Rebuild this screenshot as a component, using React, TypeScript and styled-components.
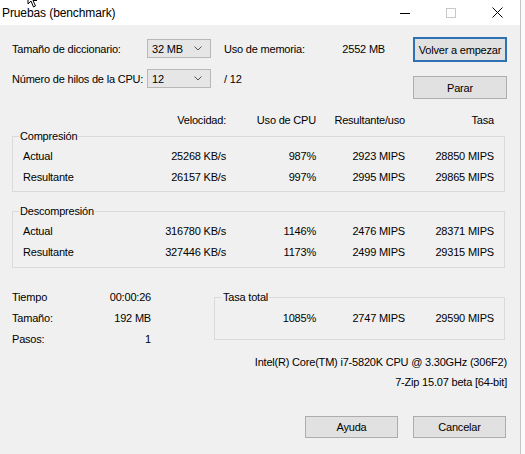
import React from 'react';
import styled, { createGlobalStyle } from 'styled-components';

const GlobalStyle = createGlobalStyle`
  html, body {
    margin: 0;
    padding: 0;
    background: #fafafa;
  }
  body {
    font-family: "Liberation Sans", Arial, sans-serif;
    font-size: 11px;
    letter-spacing: -0.2px;
    color: #000;
  }
`;

const COLS = '113px 90px 90px 89px 89px';

const Window = styled.div`
  width: 520px;
  height: 454px;
  border-right: 1px solid #c4c4c4;
  background: #f0f0f0;
  display: flex;
  flex-direction: column;
  overflow: hidden;
`;

const TitleBar = styled.div`
  position: relative;
  height: 25px;
  background: #fff;
  display: flex;
  align-items: center;
  padding-left: 2px;
`;

const Title = styled.div`
  font-size: 12px;
  letter-spacing: -0.1px;
  flex: 1;
`;

const CaptionButton = styled.div`
  width: 46px;
  height: 25px;
  display: flex;
  align-items: center;
  justify-content: center;
`;

const Cursor = styled.svg`
  position: absolute;
  left: 27px;
  top: -9px;
`;

const Body = styled.div`
  flex: 1;
  padding: 12px 13px 0 12px;
  display: flex;
  flex-direction: column;
`;

const TopSection = styled.div`
  display: flex;
  justify-content: space-between;
`;

const TopLeft = styled.div`
  padding-top: 1px;
  display: flex;
  flex-direction: column;
  gap: 9px;
`;

const TopRow = styled.div`
  display: flex;
  align-items: center;
  height: 21px;
`;

const FieldLabel = styled.div`
  width: 134px;
  white-space: nowrap;
`;

const Select = styled.div`
  width: 64px;
  height: 19px;
  border: 1px solid #b8b8b8;
  background: #e6e6e6;
  display: flex;
  align-items: center;
  justify-content: space-between;
  padding: 0 8px 0 4px;
  box-sizing: border-box;
  margin-left: 1px;
`;

const Memory = styled.div`
  margin-left: 13px;
  width: 161px;
  display: flex;
  justify-content: space-between;
`;

const TopButtons = styled.div`
  display: flex;
  flex-direction: column;
  gap: 14px;
`;

const Button = styled.div<{ $default?: boolean; $w?: number; $h?: number }>`
  width: ${p => p.$w ?? 94}px;
  height: ${p => p.$h ?? 23}px;
  box-sizing: border-box;
  background: #e1e1e1;
  border: ${p => (p.$default ? '2px solid #2d72b3' : '1px solid #adadad')};
  display: flex;
  align-items: center;
  justify-content: center;
`;

const HeaderRow = styled.div`
  margin-top: 14px;
  padding-left: 11px;
  display: grid;
  grid-template-columns: ${COLS};
  height: 14px;
  line-height: 14px;
`;

const Cell = styled.div<{ $left?: boolean }>`
  text-align: ${p => (p.$left ? 'left' : 'right')};
  white-space: nowrap;
`;

const Group = styled.fieldset<{ $mt: number; $pt: number; $pb: number; $pl?: number }>`
  margin: ${p => p.$mt}px 2px 0 0;
  padding: ${p => p.$pt}px 0 ${p => p.$pb}px ${p => p.$pl ?? 10}px;
  border: 1px solid #dadada;
  min-width: 0;
`;

const Legend = styled.legend<{ $ml?: number }>`
  padding: 0 1px;
  margin-left: ${p => p.$ml ?? -4}px;
  line-height: 14px;
  height: 14px;
`;

const DataRow = styled.div<{ $cols?: string }>`
  display: grid;
  grid-template-columns: ${p => p.$cols ?? COLS};
  height: 21px;
  line-height: 21px;
`;

const BottomSection = styled.div`
  margin-top: 19px;
  display: flex;
  align-items: flex-start;
`;

const Stats = styled.div`
  width: 139px;
  display: flex;
  flex-direction: column;
`;

const StatRow = styled.div`
  display: flex;
  justify-content: space-between;
  height: 21px;
  line-height: 21px;
`;

const TotalGroup = styled(Group)`
  margin: 3px 2px 0 63px;
  flex: 1;
`;

const InfoLine = styled.div<{ $mt: number }>`
  margin-top: ${p => p.$mt}px;
  text-align: right;
  height: 14px;
  line-height: 14px;
`;

const Footer = styled.div`
  margin-top: 27px;
  display: flex;
  justify-content: flex-end;
  gap: 15px;
  padding-right: 1px;
`;

const Chevron = () => (
  <svg width="8" height="5" viewBox="0 0 8 5">
    <path d="M0.5 0.5 L4 4 L7.5 0.5" fill="none" stroke="#555" strokeWidth="1" />
  </svg>
);

const rows = {
  comp: [
    ['Actual', '25268 KB/s', '987%', '2923 MIPS', '28850 MIPS'],
    ['Resultante', '26157 KB/s', '997%', '2995 MIPS', '29865 MIPS'],
  ],
  decomp: [
    ['Actual', '316780 KB/s', '1146%', '2476 MIPS', '28371 MIPS'],
    ['Resultante', '327446 KB/s', '1173%', '2499 MIPS', '29315 MIPS'],
  ],
};

const Row = ({ cells }: { cells: string[] }) => (
  <DataRow>
    {cells.map((c, i) => (
      <Cell key={i} $left={i === 0}>{c}</Cell>
    ))}
  </DataRow>
);

export default function App() {
  return (
    <>
      <GlobalStyle />
      <Window>
        <TitleBar>
          <Cursor width="14" height="17" viewBox="0 0 14 17">
            <path d="M1 1 L1 13 L4 10 L6.5 16 L8.5 15 L6 9.5 L10 9.5 Z" fill="#fff" stroke="#000" strokeWidth="1" />
          </Cursor>
          <Title>Pruebas (benchmark)</Title>
          <CaptionButton>
            <svg width="10" height="10" viewBox="0 0 10 10">
              <path d="M0 5.5 H10" stroke="#000" strokeWidth="1" />
            </svg>
          </CaptionButton>
          <CaptionButton>
            <svg width="10" height="10" viewBox="0 0 10 10">
              <rect x="0.5" y="0.5" width="9" height="9" fill="none" stroke="#c8c8c8" strokeWidth="1" />
            </svg>
          </CaptionButton>
          <CaptionButton>
            <svg width="11" height="11" viewBox="0 0 11 11">
              <path d="M0.5 0.5 L10.5 10.5 M10.5 0.5 L0.5 10.5" stroke="#000" strokeWidth="1" />
            </svg>
          </CaptionButton>
        </TitleBar>
        <Body>
          <TopSection>
            <TopLeft>
              <TopRow>
                <FieldLabel>Tamaño de diccionario:</FieldLabel>
                <Select>
                  <span>32 MB</span>
                  <Chevron />
                </Select>
                <Memory>
                  <span>Uso de memoria:</span>
                  <span>2552 MB</span>
                </Memory>
              </TopRow>
              <TopRow>
                <FieldLabel>Número de hilos de la CPU:</FieldLabel>
                <Select>
                  <span>12</span>
                  <Chevron />
                </Select>
                <Memory>
                  <span>/ 12</span>
                </Memory>
              </TopRow>
            </TopLeft>
            <TopButtons>
              <Button $default $h={25}>Volver a empezar</Button>
              <Button>Parar</Button>
            </TopButtons>
          </TopSection>

          <HeaderRow>
            <Cell $left />
            <Cell>Velocidad:</Cell>
            <Cell>Uso de CPU</Cell>
            <Cell>Resultante/uso</Cell>
            <Cell>Tasa</Cell>
          </HeaderRow>

          <Group $mt={2} $pt={3} $pb={3}>
            <Legend>Compresión</Legend>
            {rows.comp.map((r, i) => <Row key={i} cells={r} />)}
          </Group>

          <Group $mt={12} $pt={3} $pb={4}>
            <Legend>Descompresión</Legend>
            {rows.decomp.map((r, i) => <Row key={i} cells={r} />)}
          </Group>

          <BottomSection>
            <Stats>
              <StatRow><span>Tiempo</span><span>00:00:26</span></StatRow>
              <StatRow><span>Tamaño:</span><span>192 MB</span></StatRow>
              <StatRow><span>Pasos:</span><span>1</span></StatRow>
            </Stats>
            <TotalGroup $mt={3} $pt={4} $pb={10} $pl={0}>
              <Legend $ml={7}>Tasa total</Legend>
              <DataRow $cols="101px 89px 89px">
                <Cell>1085%</Cell>
                <Cell>2747 MIPS</Cell>
                <Cell>29590 MIPS</Cell>
              </DataRow>
            </TotalGroup>
          </BottomSection>

          <InfoLine $mt={5}>Intel(R) Core(TM) i7-5820K CPU @ 3.30GHz (306F2)</InfoLine>
          <InfoLine $mt={6}>7-Zip 15.07 beta [64-bit]</InfoLine>

          <Footer>
            <Button $w={93} $h={22}>Ayuda</Button>
            <Button $w={93} $h={22}>Cancelar</Button>
          </Footer>
        </Body>
      </Window>
    </>
  );
}
